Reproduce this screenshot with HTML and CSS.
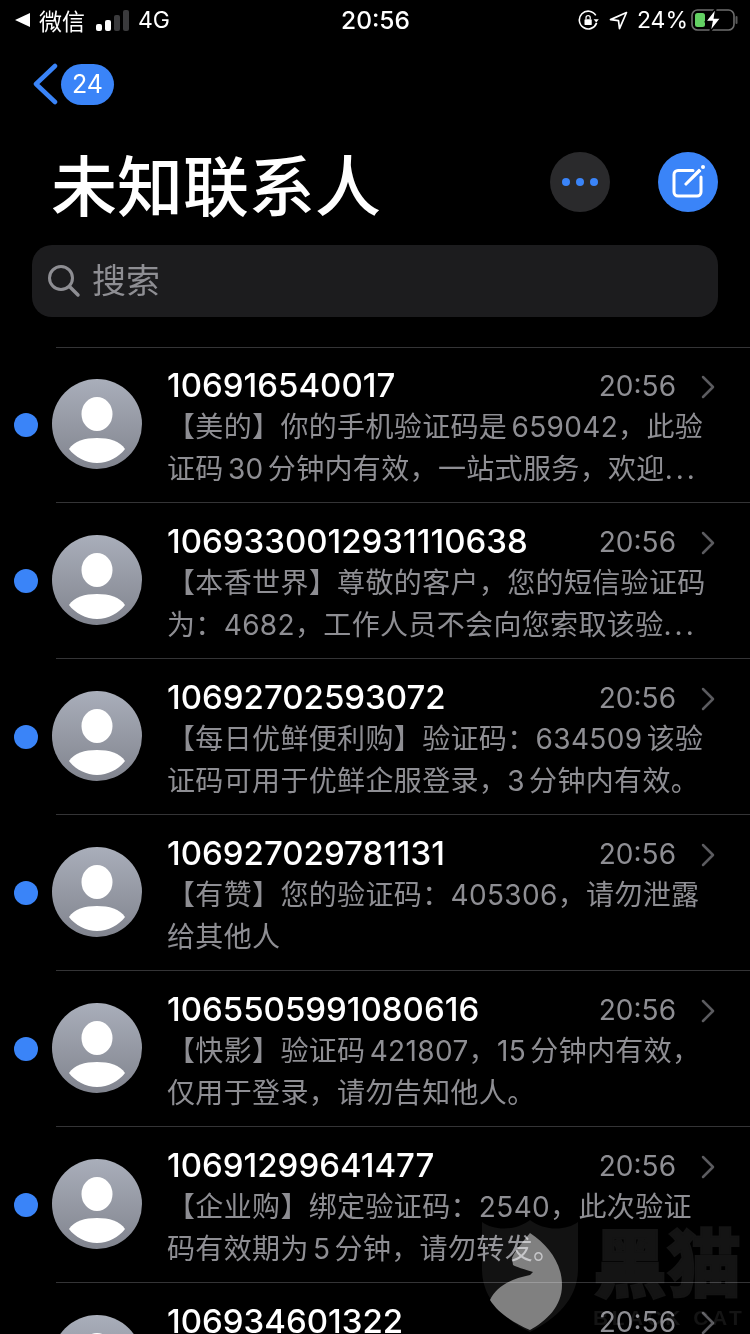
FILE: index.html
```html
<html>
<head>
  <meta charset="utf-8">
  <title>未知联系人</title>
  <link rel="stylesheet" href="styles.css">
</head>
<body>

<div class="status-bar">
  <div class="status-left">
    <svg class="back-arrow" width="15" height="14" viewBox="0 0 15 14"><path d="M0 7 15 0V14Z" fill="#fff"/></svg>
    <span class="app-name">微信</span>
    <div class="signal">
      <i class="on s1"></i><i class="on s2"></i><i class="s3"></i><i class="s4"></i>
    </div>
    <span>4G</span>
  </div>
  <div class="status-time">20:56</div>
  <div class="status-right">
    <svg width="21" height="21" viewBox="0 0 22 22" fill="none">
      <path d="M19.5 13.5A9.3 9.3 0 1 1 18.6 5.6" stroke="#fff" stroke-width="1.7"/>
      <path d="M16.4 9.8h5.4l-2.7 3.4Z" fill="#fff"/>
      <rect x="6.8" y="9.6" width="7.6" height="6.2" rx="1" fill="#fff"/>
      <path d="M8.4 9.6V8a2.2 2.2 0 0 1 4.4 0v1.6" stroke="#fff" stroke-width="1.3"/>
    </svg>
    <svg class="loc" width="19" height="19" viewBox="0 0 19 19" fill="none"><path d="M17.5 1.5 1.5 8.6l8 1 1 8Z" stroke="#fff" stroke-width="1.7" stroke-linejoin="round"/></svg>
    <span class="percent">24%</span>
    <svg width="48" height="24" viewBox="0 0 48 24" fill="none">
      <rect x="1" y="2" width="42" height="20" rx="5.5" stroke="#6d6d6d" stroke-width="1.6"/>
      <rect x="4" y="5" width="10" height="14" rx="2.5" fill="#63d163"/>
      <path d="M45.5 9v6" stroke="#5a5a5a" stroke-width="2" stroke-linecap="round"/>
      <path d="M25 0 14.5 13.5H21L19 24 30 10h-6.600Z" fill="#fff" stroke="#000" stroke-width="1.500"/>
    </svg>
  </div>
</div>

<div class="nav">
  <svg width="26" height="42" viewBox="0 0 26 42" fill="none"><path d="M23 3 4 21l19 18" stroke="#3a84f8" stroke-width="4.500" stroke-linecap="round" stroke-linejoin="round"/></svg>
  <span class="badge">24</span>
</div>

<div class="header">
  <h1>未知联系人</h1>
  <div class="round-btn more"><i></i><i></i><i></i></div>
  <div class="round-btn compose">
    <svg width="60" height="60" viewBox="0 0 60 60" fill="none">
      <path d="M35 18.500H20a4 4 0 0 0-4 4V40a4 4 0 0 0 4 4h19a4 4 0 0 0 4-4V25" stroke="#fff" stroke-width="3" stroke-linecap="round"/>
      <path d="M27 32 41 17.500l1.500 1.500L28 33Z" fill="#fff" stroke="#fff" stroke-width="1.500" stroke-linejoin="round"/>
      <circle cx="45" cy="15" r="2" fill="#fff"/>
    </svg>
  </div>
</div>

<div class="search">
  <svg width="34" height="34" viewBox="0 0 34 34" fill="none"><circle cx="14" cy="14" r="11.500" stroke="#8e8e93" stroke-width="3"/><path d="M22.500 22.500 31 31" stroke="#8e8e93" stroke-width="3.500" stroke-linecap="round"/></svg>
  <span>搜索</span>
</div>

<div class="list">
  <div class="row">
    <span class="dot"></span>
    <div class="avatar"><svg width="90" height="90" viewBox="0 0 90 90"><ellipse cx="45" cy="35" rx="15.500" ry="17" fill="#fff"/><path d="M17 70C22 62 33 59 45 59s23 3 28 11C67 78 56 84 45 84S23 78 17 70Z" fill="#fff"/></svg></div>
    <div class="content">
      <div class="head"><span class="name">106916540017</span><span class="time">20:56</span><svg class="chevron" width="14" height="24" viewBox="0 0 14 24" fill="none"><path d="M2 2l10 10L2 22" stroke="#5b5b5f" stroke-width="2.500" stroke-linecap="round" stroke-linejoin="round"/></svg></div>
      <div class="msg">【美的】你的手机验证码是 659042，此验</div>
      <div class="msg">证码 30 分钟内有效，一站式服务，欢迎<span class="ell">...</span></div>
    </div>
  </div>
  <div class="row">
    <span class="dot"></span>
    <div class="avatar"><svg width="90" height="90" viewBox="0 0 90 90"><ellipse cx="45" cy="35" rx="15.500" ry="17" fill="#fff"/><path d="M17 70C22 62 33 59 45 59s23 3 28 11C67 78 56 84 45 84S23 78 17 70Z" fill="#fff"/></svg></div>
    <div class="content">
      <div class="head"><span class="name">1069330012931110638</span><span class="time">20:56</span><svg class="chevron" width="14" height="24" viewBox="0 0 14 24" fill="none"><path d="M2 2l10 10L2 22" stroke="#5b5b5f" stroke-width="2.500" stroke-linecap="round" stroke-linejoin="round"/></svg></div>
      <div class="msg">【本香世界】尊敬的客户，您的短信验证码</div>
      <div class="msg">为：4682，工作人员不会向您索取该验<span class="ell">...</span></div>
    </div>
  </div>
  <div class="row">
    <span class="dot"></span>
    <div class="avatar"><svg width="90" height="90" viewBox="0 0 90 90"><ellipse cx="45" cy="35" rx="15.500" ry="17" fill="#fff"/><path d="M17 70C22 62 33 59 45 59s23 3 28 11C67 78 56 84 45 84S23 78 17 70Z" fill="#fff"/></svg></div>
    <div class="content">
      <div class="head"><span class="name">10692702593072</span><span class="time">20:56</span><svg class="chevron" width="14" height="24" viewBox="0 0 14 24" fill="none"><path d="M2 2l10 10L2 22" stroke="#5b5b5f" stroke-width="2.500" stroke-linecap="round" stroke-linejoin="round"/></svg></div>
      <div class="msg">【每日优鲜便利购】验证码：634509 该验</div>
      <div class="msg">证码可用于优鲜企服登录，3 分钟内有效。</div>
    </div>
  </div>
  <div class="row">
    <span class="dot"></span>
    <div class="avatar"><svg width="90" height="90" viewBox="0 0 90 90"><ellipse cx="45" cy="35" rx="15.500" ry="17" fill="#fff"/><path d="M17 70C22 62 33 59 45 59s23 3 28 11C67 78 56 84 45 84S23 78 17 70Z" fill="#fff"/></svg></div>
    <div class="content">
      <div class="head"><span class="name">106927029781131</span><span class="time">20:56</span><svg class="chevron" width="14" height="24" viewBox="0 0 14 24" fill="none"><path d="M2 2l10 10L2 22" stroke="#5b5b5f" stroke-width="2.500" stroke-linecap="round" stroke-linejoin="round"/></svg></div>
      <div class="msg">【有赞】您的验证码：405306，请勿泄露</div>
      <div class="msg">给其他人</div>
    </div>
  </div>
  <div class="row">
    <span class="dot"></span>
    <div class="avatar"><svg width="90" height="90" viewBox="0 0 90 90"><ellipse cx="45" cy="35" rx="15.500" ry="17" fill="#fff"/><path d="M17 70C22 62 33 59 45 59s23 3 28 11C67 78 56 84 45 84S23 78 17 70Z" fill="#fff"/></svg></div>
    <div class="content">
      <div class="head"><span class="name">1065505991080616</span><span class="time">20:56</span><svg class="chevron" width="14" height="24" viewBox="0 0 14 24" fill="none"><path d="M2 2l10 10L2 22" stroke="#5b5b5f" stroke-width="2.500" stroke-linecap="round" stroke-linejoin="round"/></svg></div>
      <div class="msg">【快影】验证码 421807，15 分钟内有效，</div>
      <div class="msg">仅用于登录，请勿告知他人。</div>
    </div>
  </div>
  <div class="row">
    <span class="dot"></span>
    <div class="avatar"><svg width="90" height="90" viewBox="0 0 90 90"><ellipse cx="45" cy="35" rx="15.500" ry="17" fill="#fff"/><path d="M17 70C22 62 33 59 45 59s23 3 28 11C67 78 56 84 45 84S23 78 17 70Z" fill="#fff"/></svg></div>
    <div class="content">
      <div class="head"><span class="name">10691299641477</span><span class="time">20:56</span><svg class="chevron" width="14" height="24" viewBox="0 0 14 24" fill="none"><path d="M2 2l10 10L2 22" stroke="#5b5b5f" stroke-width="2.500" stroke-linecap="round" stroke-linejoin="round"/></svg></div>
      <div class="msg">【企业购】绑定验证码：2540，此次验证</div>
      <div class="msg">码有效期为 5 分钟，请勿转发。</div>
    </div>
  </div>
  <div class="row">
    <span class="dot"></span>
    <div class="avatar"><svg width="90" height="90" viewBox="0 0 90 90"><ellipse cx="45" cy="35" rx="15.500" ry="17" fill="#fff"/><path d="M17 70C22 62 33 59 45 59s23 3 28 11C67 78 56 84 45 84S23 78 17 70Z" fill="#fff"/></svg></div>
    <div class="content">
      <div class="head"><span class="name">106934601322</span><span class="time">20:56</span><svg class="chevron" width="14" height="24" viewBox="0 0 14 24" fill="none"><path d="M2 2l10 10L2 22" stroke="#5b5b5f" stroke-width="2.500" stroke-linecap="round" stroke-linejoin="round"/></svg></div>
    </div>
  </div>
</div>

<!-- watermark -->
<div class="watermark">
  <svg width="100" height="114" viewBox="0 0 100 114">
    <path d="M2 3C14 12 36 12 50 1 64 12 86 12 98 3V50C98 80 76 100 50 113 24 100 2 80 2 50Z" fill="#121212"/>
    <path d="M50 14C68 26 82 44 82 66 82 88 66 102 50 111 34 104 18 94 10 81 16 68 30 60 50 56L53 53C44 50 36 48 33 46L32 39C36 30 42 24 50 14Z" fill="#808080"/>
  </svg>
  <div class="wm-text">
    <div class="wm-cn">黑猫</div>
    <div class="wm-en">BLACK CAT</div>
  </div>
</div>

</body>
</html>
```

FILE: styles.css
```css
* {
  box-sizing: border-box;
}

body {
  position: relative;
  width: 750px;
  height: 1334px;
  margin: 0;
  overflow: hidden;
  background: #000;
  color: #fff;
  font-family: Inter, 'Noto Sans CJK SC', sans-serif;
}

/* status bar */
.status-bar {
  display: grid;
  grid-template-columns: 1fr auto 1fr;
  align-items: center;
  height: 40px;
  padding: 0 11px 0 15px;
  font-size: 23px;
}

.status-left,
.status-right {
  display: flex;
  align-items: center;
}

.status-right {
  justify-content: flex-end;
}

.app-name {
  margin: 0 11px 0 9px;
  font-size: 23px;
}

.signal {
  display: flex;
  align-items: flex-end;
  gap: 3px;
  height: 22px;
  margin-right: 9px;
}

.signal i {
  width: 6px;
  border-radius: 2px;
  background: #3a3a3c;
}

.signal i.on {
  background: #fff;
}

.s1 { height: 7px; }
.s2 { height: 11px; }
.s3 { height: 16px; }
.s4 { height: 21px; }

.status-time {
  margin-right: 3px;
  font-size: 24.500px;
  font-weight: 500;
}

.loc {
  margin: 0 9px 0 10px;
}

.percent {
  margin-right: 3px;
}

/* nav + title */
.nav {
  display: flex;
  align-items: center;
  gap: 3px;
  height: 42px;
  margin-top: 23px;
  padding-left: 32px;
}

.badge {
  width: 53px;
  height: 41px;
  border-radius: 21px;
  background: #3a84f8;
  font-size: 25px;
  line-height: 41px;
  text-align: center;
}

.header {
  display: flex;
  align-items: center;
  height: 60px;
  margin-top: 47px;
  padding: 0 32px 0 51px;
}

h1 {
  flex: 1;
  margin: 0;
  padding-top: 10px;
  font-size: 66px;
  font-weight: 500;
  line-height: 70px;
}

.round-btn {
  display: flex;
  align-items: center;
  justify-content: center;
  width: 60px;
  height: 60px;
  border-radius: 50%;
}

.more {
  gap: 6px;
  margin-right: 48px;
  background: #2a2a2c;
}

.more i {
  width: 8px;
  height: 8px;
  border-radius: 50%;
  background: #3a84f8;
}

.compose {
  background: #3a84f8;
}

.search {
  display: flex;
  align-items: center;
  gap: 11px;
  height: 72px;
  margin: 33px 32px 30px;
  padding-left: 15px;
  border-radius: 20px;
  background: #1c1c1e;
  color: #8e8e93;
  font-size: 34px;
}

.search span {
  padding-bottom: 6px;
}

/* message rows */
.row {
  display: flex;
  height: 155px;
  margin-left: 56px;
  border-top: 1px solid #343436;
}

.row + .row {
  height: 156px;
  padding-top: 1px;
}

.dot {
  flex: none;
  width: 24px;
  height: 24px;
  margin: 65px 14px 0 -42px;
  border-radius: 50%;
  background: #3a84f8;
}

.avatar {
  flex: none;
  width: 90px;
  height: 90px;
  margin-top: 31px;
  border-radius: 50%;
  overflow: hidden;
  background: linear-gradient(#a9aeba, #81848e);
}

.content {
  flex: 1;
  min-width: 0;
  padding: 19px 35px 0 25px;
}

.head {
  display: flex;
  align-items: center;
  height: 36px;
  margin-bottom: 3px;
}

.name {
  flex: 1;
  font-size: 33px;
  font-weight: 500;
  white-space: nowrap;
}

.time {
  margin-top: 2px;
  color: #8e8e93;
  font-size: 28px;
}

.chevron {
  margin: 4px 0 0 25px;
}

.msg {
  height: 42px;
  color: #8e8e93;
  font-size: 28px;
  letter-spacing: 0.35px;
  line-height: 42px;
  white-space: nowrap;
  word-spacing: -4px;
}

.ell {
  letter-spacing: 3px;
}

.watermark {
  position: absolute;
  left: 480px;
  top: 1219px;
  display: flex;
  gap: 13px;
  mix-blend-mode: screen;
}

.wm-text {
  padding-top: 8px;
  color: #141414;
  font-weight: 900;
}

.wm-cn {
  font-size: 74px;
  line-height: 74px;
  -webkit-text-stroke: 2px #141414;
}

.wm-en {
  margin-top: 5px;
  font-family: 'Liberation Sans', sans-serif;
  font-size: 21px;
  font-weight: 700;
  letter-spacing: 3.500px;
  line-height: 24px;
  white-space: nowrap;
}
```
